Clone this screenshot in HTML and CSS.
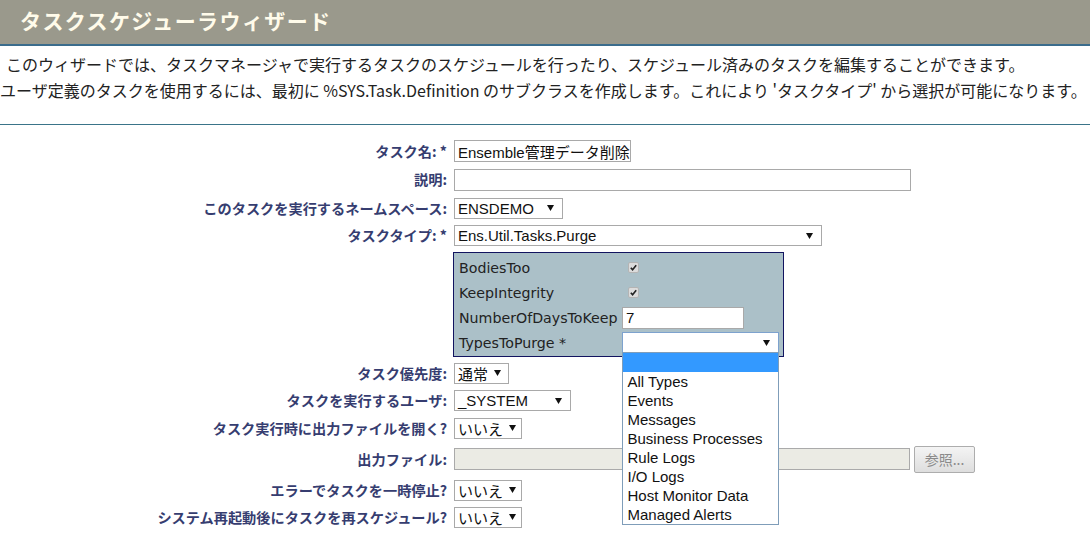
FILE: index.html
```html
<!DOCTYPE html>
<html lang="ja">
<head>
<meta charset="utf-8">
<title>タスクスケジューラウィザード</title>
<link rel="stylesheet" href="styles.css">
</head>
<body>
<header class="titlebar"><h1>タスクスケジューラウィザード</h1></header>
<div class="intro">
  <p class="first">このウィザードでは、タスクマネージャで実行するタスクのスケジュールを行ったり、スケジュール済みのタスクを編集することができます。</p>
  <p>ユーザ定義のタスクを使用するには、最初に %SYS.Task.Definition のサブクラスを作成します。これにより 'タスクタイプ' から選択が可能になります。</p>
</div>
<form class="form">
  <div class="row r28">
    <div class="label">タスク名: *</div>
    <div class="field"><span class="input w-name">Ensemble管理データ削除</span></div>
  </div>
  <div class="row r29">
    <div class="label">説明:</div>
    <div class="field"><span class="input w-desc"></span></div>
  </div>
  <div class="row r28">
    <div class="label">このタスクを実行するネームスペース:</div>
    <div class="field"><span class="select w-ns"><span>ENSDEMO</span><svg class="arrow" viewBox="0 0 7 6"><path d="M0 0h7L3.5 6z"/></svg></span></div>
  </div>
  <div class="row r27">
    <div class="label">タスクタイプ: *</div>
    <div class="field"><span class="select w-type"><span>Ens.Util.Tasks.Purge</span><svg class="arrow" viewBox="0 0 7 6"><path d="M0 0h7L3.5 6z"/></svg></span></div>
  </div>
  <div class="row panel-row">
    <div class="label"></div>
    <div class="panel">
      <div class="prow"><span class="plabel">BodiesToo</span><span class="check"><svg viewBox="0 0 10 10"><path d="M2 5.2l2 2.3 4-5" fill="none" stroke="#222" stroke-width="1.8"/></svg></span></div>
      <div class="prow"><span class="plabel">KeepIntegrity</span><span class="check"><svg viewBox="0 0 10 10"><path d="M2 5.2l2 2.3 4-5" fill="none" stroke="#222" stroke-width="1.8"/></svg></span></div>
      <div class="prow"><span class="plabel">NumberOfDaysToKeep</span><span class="input w-days">7</span></div>
      <div class="prow"><span class="plabel">TypesToPurge *</span>
        <span class="select w-purge focus"><span></span><svg class="arrow" viewBox="0 0 7 6"><path d="M0 0h7L3.5 6z"/></svg>
          <ul class="dropdown">
            <li class="hl">&nbsp;</li>
            <li>All Types</li>
            <li>Events</li>
            <li>Messages</li>
            <li>Business Processes</li>
            <li>Rule Logs</li>
            <li>I/O Logs</li>
            <li>Host Monitor Data</li>
            <li>Managed Alerts</li>
          </ul>
        </span>
      </div>
    </div>
  </div>
  <div class="row r28 after-panel">
    <div class="label">タスク優先度:</div>
    <div class="field"><span class="select w-prio"><span>通常</span><svg class="arrow" viewBox="0 0 7 6"><path d="M0 0h7L3.5 6z"/></svg></span></div>
  </div>
  <div class="row r27">
    <div class="label">タスクを実行するユーザ:</div>
    <div class="field"><span class="select w-user"><span>_SYSTEM</span><svg class="arrow" viewBox="0 0 7 6"><path d="M0 0h7L3.5 6z"/></svg></span></div>
  </div>
  <div class="row r28">
    <div class="label">タスク実行時に出力ファイルを開く?</div>
    <div class="field"><span class="select w-yn"><span>いいえ</span><svg class="arrow" viewBox="0 0 7 6"><path d="M0 0h7L3.5 6z"/></svg></span></div>
  </div>
  <div class="row r34">
    <div class="label">出力ファイル:</div>
    <div class="field file"><span class="input w-file disabled"></span><span class="button">参照...</span></div>
  </div>
  <div class="row r28">
    <div class="label">エラーでタスクを一時停止?</div>
    <div class="field"><span class="select w-yn"><span>いいえ</span><svg class="arrow" viewBox="0 0 7 6"><path d="M0 0h7L3.5 6z"/></svg></span></div>
  </div>
  <div class="row r26">
    <div class="label">システム再起動後にタスクを再スケジュール?</div>
    <div class="field"><span class="select w-yn"><span>いいえ</span><svg class="arrow" viewBox="0 0 7 6"><path d="M0 0h7L3.5 6z"/></svg></span></div>
  </div>
</form>
</body>
</html>
```
FILE: styles.css
```css
* { box-sizing: border-box; }
body {
  margin: 0;
  background: #fff;
  font-family: "Noto Sans CJK JP", sans-serif;
  color: #222;
  overflow: hidden;
}
.titlebar {
  height: 46px;
  background: #9a998c;
  border-bottom: 2px solid #3b6c8c;
  padding-left: 20px;
  display: flex;
  align-items: center;
}
.titlebar h1 {
  margin: 0;
  font-size: 21px;
  font-weight: bold;
  color: #fffbea;
  letter-spacing: 1.4px;
  line-height: 1;
  padding-bottom: 4px;
}
.intro {
  border-bottom: 1px solid #3a7489;
  padding: 5px 0 10px 0;
  height: 79px;
}
.intro p {
  margin: 0;
  font-size: 16px;
  line-height: 26px;
  white-space: nowrap;
  color: #222;
}
.intro p.first { padding-left: 6px; }

.form { padding-top: 12px; }
.row {
  display: grid;
  grid-template-columns: 447px 1fr;
  column-gap: 7px;
  align-items: center;
}
.r26 { height: 26px; }
.r27 { height: 27px; }
.r28 { height: 28px; }
.r29 { height: 29px; }
.r34 { height: 34px; }
.label {
  text-align: right;
  font-weight: bold;
  font-size: 14.2px;
  color: #363d70;
  white-space: nowrap;
  line-height: 1;
}
.field { display: flex; align-items: center; }
.input, .select {
  display: inline-flex;
  align-items: center;
  height: 22px;
  border: 1px solid #a9a9a9;
  background: #fff;
  font-family: "Liberation Sans", "Noto Sans CJK JP", sans-serif;
  font-size: 15px;
  color: #111;
  padding: 0 3px;
  white-space: nowrap;
  position: relative;
}
.select {
  height: 21px;
  justify-content: space-between;
  padding: 0 8px 0 3px;
}
.arrow { width: 7px; height: 6px; fill: #111; flex: none; margin-left: 6px; }
.w-name { width: 177px; }
.w-desc { width: 457px; }
.w-ns { width: 109px; }
.w-type { width: 368px; }
.w-prio { width: 55px; }
.w-user { width: 117px; }
.w-yn { width: 68px; }
.w-file { width: 456px; }
.w-days { width: 122px; height: 22px; font-size: 15px; }
.w-purge { width: 157px; }
.disabled { background: #ebebe4; border-color: #aaa; }
.file { gap: 4px; }
.button {
  display: inline-flex;
  align-items: center;
  justify-content: center;
  width: 61px;
  height: 27px;
  border: 1px solid #adadad;
  border-radius: 2px;
  background: linear-gradient(#f4f4f4, #dedede);
  color: #8a8a8a;
  font-size: 14px;
}

.panel-row { margin-top: 3px; }
.panel {
  margin-left: -1px;
  width: 331px;
  background: #abc0c8;
  border: 1px solid #121460;
  padding: 2px 4px 1px 5px;
}
.prow {
  height: 25px;
  display: flex;
  align-items: center;
}
.plabel {
  width: 164px;
  font-family: "DejaVu Sans", sans-serif;
  font-size: 14.2px;
  color: #222;
  white-space: nowrap;
}
.check {
  margin-left: 5px;
  width: 11px;
  height: 11px;
  border-radius: 2px;
  background: #dcdcdc;
  border: 1px solid #b4b4b4;
  display: inline-flex;
}
.check svg { width: 9px; height: 9px; }
.w-days { margin-left: -1px; }
.focus { border-color: #7da2ce; margin-left: 0; }
.dropdown {
  position: absolute;
  top: 19px;
  left: -1px;
  width: 157px;
  margin: 0;
  padding: 0;
  list-style: none;
  background: #fff;
  border: 1px solid #7f9db9;
  z-index: 5;
}
.dropdown li {
  height: 19px;
  line-height: 19px;
  padding-left: 4px;
  font-family: "Liberation Sans", sans-serif;
  font-size: 15px;
  color: #111;
}
.dropdown li.hl { background: #3399ff; }
.after-panel { margin-top: 2px; }
```
